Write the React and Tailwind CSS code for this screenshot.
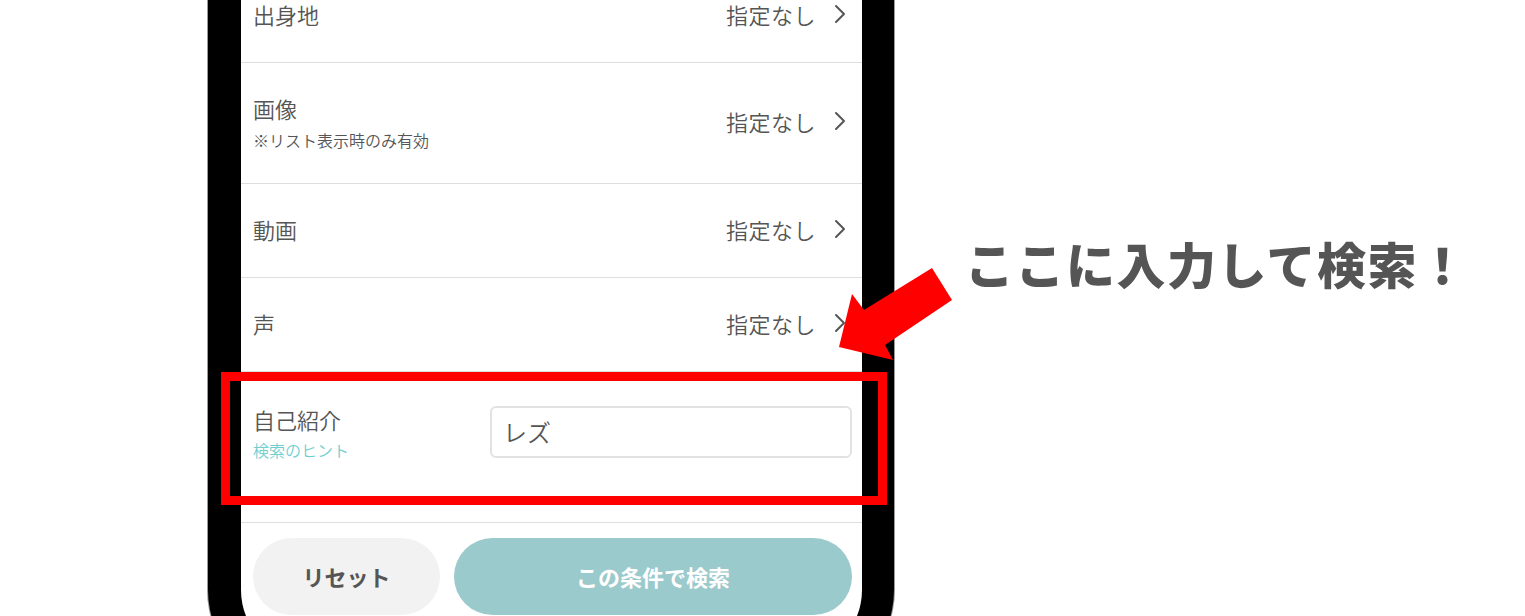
import React from "react";

const FONT = { fontFamily: '"Noto Sans CJK JP", "Noto Sans", sans-serif' };

function Chevron() {
  return (
    <svg width="14" height="20" viewBox="0 0 14 20" className="ml-[17px]">
      <polyline points="3,2 11,10 3,18" fill="none" stroke="#555555" strokeWidth="2" strokeLinecap="round" strokeLinejoin="round" />
    </svg>
  );
}

function SelectRow({ label, sub, h }) {
  return (
    <div className={`flex items-center justify-between border-b border-[#dedede] pb-[4px] pl-[12px] pr-[15px] ${h}`}>
      <div className="flex flex-col">
        <span className="text-[22px] font-[350] leading-[28px] text-[#555555]">{label}</span>
        {sub && <span className="mt-[9px] text-[16px] font-[350] leading-[18px] text-[#555555]">{sub}</span>}
      </div>
      <div className="flex items-center">
        <span className="text-[22px] font-[350] leading-[28px] tracking-[0.5px] text-[#555555]">指定なし</span>
        <Chevron />
      </div>
    </div>
  );
}

export default function App() {
  return (
    <div className="relative flex h-[616px] w-[1525px] overflow-hidden bg-white" style={FONT}>
      <div className="-mt-[31px] ml-[208px] flex h-[721px] w-[686px] shrink-0 flex-col rounded-b-[100px] bg-black pb-[30px] pl-[33px] pr-[32px] shadow-[0_0_0_1px_#9a9a9a]">
        <div className="flex h-[691px] flex-col overflow-hidden rounded-b-[70px] bg-white">
          <SelectRow label="出身地" h="h-[94px]" />
          <SelectRow label="画像" sub="※リスト表示時のみ有効" h="h-[121px]" />
          <SelectRow label="動画" h="h-[94px]" />
          <SelectRow label="声" h="h-[94px]" />
          <div className="flex h-[151px] items-center border-b border-[#dedede] pb-[30px] pl-[12px] pr-[10px]">
            <div className="flex w-[237px] flex-col">
              <span className="text-[22px] font-[350] leading-[28px] text-[#555555]">自己紹介</span>
              <span className="mt-[8px] text-[16px] font-[350] leading-[18px] text-[#6fcfcf]">検索のヒント</span>
            </div>
            <div className="flex h-[52px] w-[362px] items-center rounded-[6px] border-2 border-[#e2e2e2] px-[11px] text-[24px] font-[350] text-[#555555]">
              レズ
            </div>
          </div>
          <div className="flex gap-[14px] pl-[12px] pr-[10px] pt-[15px]">
            <button className="flex h-[77px] w-[187px] items-center justify-center rounded-full bg-[#f2f2f2] text-[22px] font-bold text-[#555555]">
              リセット
            </button>
            <button className="flex h-[77px] w-[398px] items-center justify-center rounded-full bg-[#9bcacc] text-[22px] font-bold text-white">
              この条件で検索
            </button>
          </div>
        </div>
      </div>

      <div className="ml-[71px] mt-[233px] whitespace-nowrap text-[49px] font-black leading-[60px] tracking-[1.5px] text-[#555555]">
        ここに入力して検索！
      </div>

      <div className="absolute left-[221px] top-[372px] h-[133px] w-[666px] border-[9px] border-[#ff0000]" />

      <svg className="absolute left-0 top-0" width="1525" height="616" viewBox="0 0 1525 616">
        <polygon points="839,347 852,294 864,310 932,268 952,300 885,345 893,360" fill="#ff0000" />
      </svg>
    </div>
  );
}
